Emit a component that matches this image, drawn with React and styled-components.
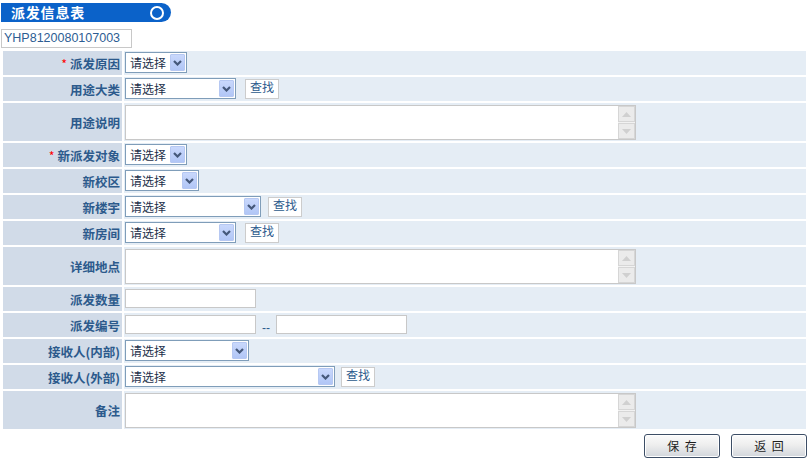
import React from "react";
import styled, { createGlobalStyle } from "styled-components";

const GlobalStyle = createGlobalStyle`
  html, body { margin: 0; padding: 0; background: #ffffff; }
  body { font-family: "Noto Sans CJK SC", "Liberation Sans", sans-serif; font-size: 12px; }
  * { box-sizing: border-box; }
`;

const Page = styled.div`
  padding: 3px 0 0 1px;
  width: 812px;
`;

const Banner = styled.div`
  width: 170px;
  height: 19px;
  background: #0b62c9;
  border-radius: 0 10px 10px 0;
  display: flex;
  align-items: center;
  justify-content: space-between;
  padding: 0 7px 0 10px;
`;

const BannerTitle = styled.span`
  color: #ffffff;
  font-weight: 700;
  font-size: 14px;
  line-height: 19px;
  letter-spacing: 0.8px;
`;

const Ring = styled.span`
  width: 14px;
  height: 14px;
  border-radius: 50%;
  border: 2.5px solid #ffffff;
  background: #0b62c9;
`;

const IdBox = styled.div`
  margin-top: 7px;
  width: 131px;
  height: 19px;
  border: 1px solid #c8c8c8;
  padding: 0 2px;
  color: #2d5d93;
  font-family: "Liberation Sans", Arial, sans-serif;
  font-size: 12.5px;
  line-height: 17px;
`;

const FormGrid = styled.div`
  margin-top: 1px;
  display: grid;
  grid-template-columns: 119px 682px;
  gap: 2px;
  padding: 2px;
  width: 807px;
`;

const Label = styled.div`
  height: ${(p) => (p.$tall ? 38 : 24)}px;
  background: #d1dbe8;
  color: #2c5a8c;
  font-weight: 700;
  font-size: 12.5px;
  display: flex;
  align-items: center;
  justify-content: flex-end;
  padding-right: 2px;
  white-space: nowrap;
`;

const Star = styled.span`
  color: #ff0000;
  margin-right: 3px;
  font-weight: 400;
`;

const Value = styled.div`
  height: ${(p) => (p.$tall ? 38 : 24)}px;
  background: #e5edf5;
  display: flex;
  align-items: flex-start;
  padding: ${(p) => (p.$tall ? 2 : 1)}px 0 0 1px;
  gap: ${(p) => p.$gap || 0}px;
`;

const SelectBox = styled.div`
  width: ${(p) => p.$w}px;
  height: 21px;
  border: 1px solid #7f9db9;
  background: #ffffff;
  display: flex;
  align-items: stretch;
  padding: 1px;
  color: #1c2f4a;
  font-size: 12px;
`;

const SelectText = styled.span`
  flex: 1;
  padding-left: 3px;
  line-height: 17px;
`;

const ArrowBtn = styled.span`
  width: 15px;
  border: 1px solid #b6c8f2;
  border-radius: 1px;
  background: linear-gradient(#c9d8fc, #b1c6f6);
  display: flex;
  align-items: center;
  justify-content: center;
`;

const SearchBtn = styled.div`
  width: 34px;
  height: 20px;
  border: 1px solid #cccccc;
  background: #ffffff;
  color: #2c5a8c;
  font-size: 12px;
  line-height: 14px;
  text-align: center;
  margin-top: 1px;
`;

const TextInput = styled.div`
  width: 131px;
  height: 19px;
  margin-top: 1px;
  border: 1px solid #c8c8c8;
  background: #ffffff;
`;

const Dash = styled.span`
  width: 8px;
  color: #2c5a8c;
  font-family: "Liberation Sans", Arial, sans-serif;
  font-size: 12px;
  line-height: 12px;
  margin-top: 8px;
`;

const TextBox = styled.div`
  width: 511px;
  height: 35px;
  border: 1px solid #c8c8c8;
  background: #ffffff;
  display: flex;
`;

const Area = styled.textarea`
  flex: 1;
  border: none;
  outline: none;
  resize: none;
  background: transparent;
  font: inherit;
`;

const ScrollTrack = styled.div`
  width: 17px;
  display: flex;
  flex-direction: column;
  gap: 1px;
  background: #f2f2f2;
`;

const ScrollBtn = styled.div`
  flex: 1;
  border: 1px solid #d6d6d6;
  background: #ebebeb;
  display: flex;
  align-items: center;
  justify-content: center;
`;

const Actions = styled.div`
  margin-top: 3px;
  width: 806px;
  display: flex;
  justify-content: flex-end;
  gap: 11px;
`;

const ActionBtn = styled.div`
  width: 76px;
  height: 24px;
  border: 1px solid #3d4e66;
  border-radius: 3px;
  box-shadow: inset 0 0 0 1px #ffffff;
  background: linear-gradient(#fbfbfb, #eeeeee 45%, #d2d6dc);
  color: #1e1e1e;
  font-size: 12px;
  line-height: 22px;
  text-align: center;
  word-spacing: 3px;
`;

const Chevron = () => (
  <svg width="9" height="6" viewBox="0 0 9 6">
    <path d="M1 1 L4.5 4.5 L8 1" fill="none" stroke="#45587a" strokeWidth="2.2" />
  </svg>
);

const Tri = ({ up }) => (
  <svg width="9" height="5" viewBox="0 0 9 5">
    <path d={up ? "M0 5 L4.5 0 L9 5 Z" : "M0 0 L4.5 5 L9 0 Z"} fill="#d0d0d0" />
  </svg>
);

const Select = ({ w }) => (
  <SelectBox $w={w}>
    <SelectText>请选择</SelectText>
    <ArrowBtn>
      <Chevron />
    </ArrowBtn>
  </SelectBox>
);

const Memo = () => (
  <TextBox>
    <Area />
    <ScrollTrack>
      <ScrollBtn>
        <Tri up />
      </ScrollBtn>
      <ScrollBtn>
        <Tri />
      </ScrollBtn>
    </ScrollTrack>
  </TextBox>
);

const Field = ({ label, star, tall, gap, children }) => (
  <>
    <Label $tall={tall}>
      {star && <Star>*</Star>}
      {label}
    </Label>
    <Value $tall={tall} $gap={gap}>
      {children}
    </Value>
  </>
);

export default function App() {
  return (
    <Page>
      <GlobalStyle />
      <Banner>
        <BannerTitle>派发信息表</BannerTitle>
        <Ring />
      </Banner>
      <IdBox>YHP8120080107003</IdBox>
      <FormGrid>
        <Field label="派发原因" star>
          <Select w={62} />
        </Field>
        <Field label="用途大类" gap={9}>
          <Select w={111} />
          <SearchBtn>查找</SearchBtn>
        </Field>
        <Field label="用途说明" tall>
          <Memo />
        </Field>
        <Field label="新派发对象" star>
          <Select w={62} />
        </Field>
        <Field label="新校区">
          <Select w={74} />
        </Field>
        <Field label="新楼宇" gap={7}>
          <Select w={136} />
          <SearchBtn>查找</SearchBtn>
        </Field>
        <Field label="新房间" gap={9}>
          <Select w={111} />
          <SearchBtn>查找</SearchBtn>
        </Field>
        <Field label="详细地点" tall>
          <Memo />
        </Field>
        <Field label="派发数量">
          <TextInput />
        </Field>
        <Field label="派发编号" gap={6}>
          <TextInput />
          <Dash>--</Dash>
          <TextInput />
        </Field>
        <Field label="接收人(内部)">
          <Select w={124} />
        </Field>
        <Field label="接收人(外部)" gap={6}>
          <Select w={210} />
          <SearchBtn>查找</SearchBtn>
        </Field>
        <Field label="备注" tall>
          <Memo />
        </Field>
      </FormGrid>
      <Actions>
        <ActionBtn>保 存</ActionBtn>
        <ActionBtn>返 回</ActionBtn>
      </Actions>
    </Page>
  );
}
